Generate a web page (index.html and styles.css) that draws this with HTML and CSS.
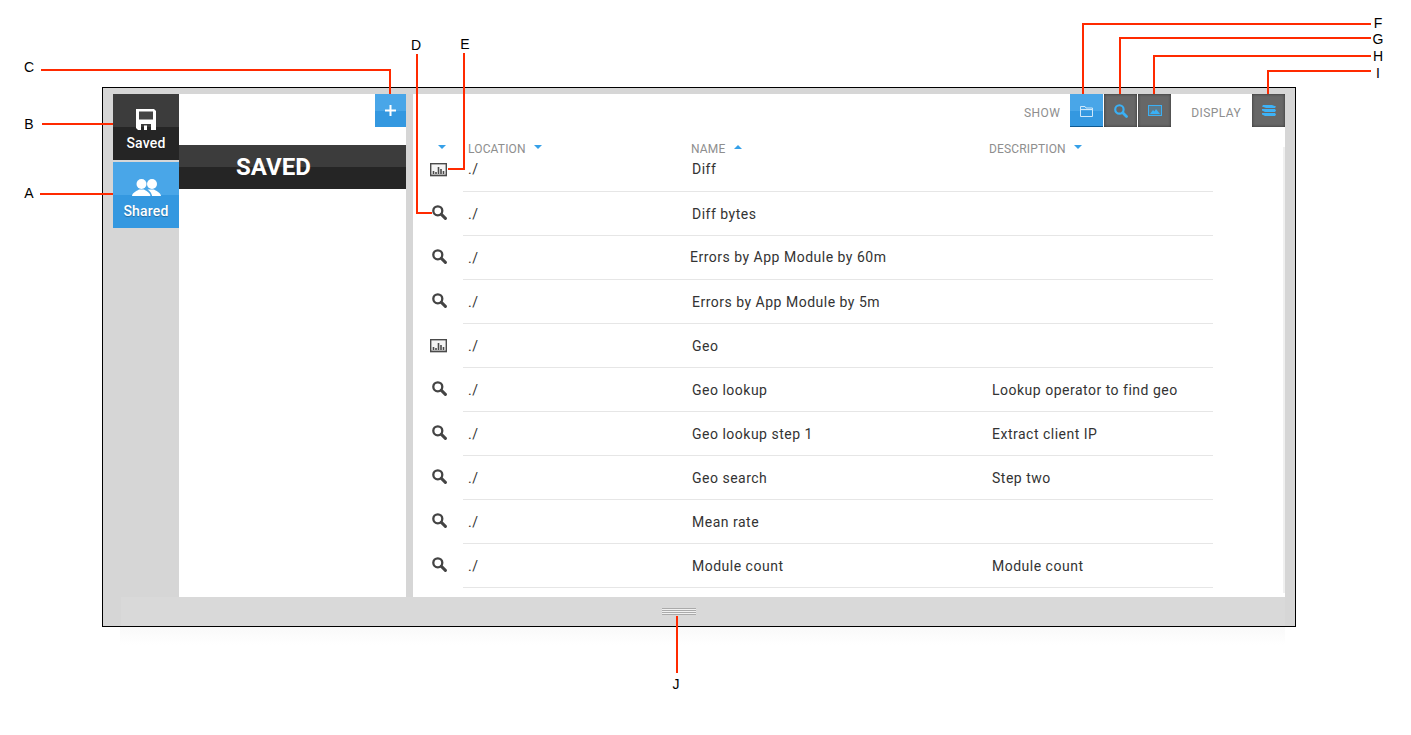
FILE: index.html
```html
<!DOCTYPE html>
<html lang="en">
<head>
    <meta charset="UTF-8">
    <meta name="viewport" content="width=device-width, initial-scale=1.0">
    <title>Saved</title>
    <link rel="stylesheet" href="styles.css">
</head>
<body>
    <svg width="0" height="0" class="defs">
        <symbol id="icon-search" viewBox="0 0 15 15">
            <circle cx="5.8" cy="5.8" r="4.500" fill="none" stroke="currentColor" stroke-width="2.300"/>
            <path d="M9.400 9.400 L13.400 13.400" fill="none" stroke="currentColor" stroke-width="3" stroke-linecap="round"/>
        </symbol>
        <symbol id="icon-chart" viewBox="0 0 17 14">
            <rect x="0.700" y="0.700" width="15.600" height="11.600" fill="#f4f4f4" stroke="#4a4a4a" stroke-width="1.400"/>
            <path d="M3.500 11V8 M6 11V9 M8.500 11V4 M11 11V6 M13.500 11V8" stroke="#4a4a4a" stroke-width="1.600" fill="none"/>
            <path d="M0 13.500H17" stroke="#c4c4c4"/>
        </symbol>
    </svg>

    <div class="canvas">
        <div class="frame">
            <div class="frame-body">
                <nav class="sidebar">
                    <a class="side-tab side-tab-dark">
                        <svg class="side-icon-saved" viewBox="0 0 20 21">
                            <path d="M0 0H18L20 2V21H15V15H5V21H2L0 19Z" fill="#fff"/>
                            <rect x="3" y="2.500" width="14" height="8" fill="#444"/>
                            <rect x="8" y="16.500" width="3" height="4.500" fill="#fff"/>
                        </svg>
                        <span>Saved</span>
                    </a>
                    <a class="side-tab side-tab-blue">
                        <svg class="side-icon-shared" viewBox="0 0 29 17">
                            <circle cx="9.500" cy="5" r="5" fill="#fff"/>
                            <path d="M0 17C0.500 13.500 4 12.500 7 10.500H12C15 12.500 18 13.500 18.500 17Z" fill="#fff"/>
                            <circle cx="20" cy="5" r="5" fill="#fff"/>
                            <path d="M20 17C19.700 14 18 12 15.500 10.500H22C25 12.500 28.500 13.500 29 17Z" fill="#fff"/>
                        </svg>
                        <span>Shared</span>
                    </a>
                </nav>

                <section class="saved-panel">
                    <div class="saved-top">
                        <button class="add-btn">
                            <svg width="11" height="11" viewBox="0 0 11 11"><path d="M5.500 0V11 M0 5.500H11" stroke="#fff" stroke-width="2"/></svg>
                        </button>
                    </div>
                    <h2 class="saved-title">SAVED</h2>
                </section>

                <section class="main-panel">
                    <div class="toolbar">
                        <span class="toolbar-label show-label">SHOW</span>
                        <button class="tool-btn tool-btn-active">
                            <svg width="14" height="12" viewBox="0 0 14 12" fill="none" stroke="#cfe8fa">
                                <path d="M0.500 11.500V1.500H5L6 3H12.500V11.500Z"/>
                                <path d="M0.500 4.500H12.500"/>
                            </svg>
                        </button>
                        <button class="tool-btn">
                            <svg class="tool-search" width="14" height="14"><use href="#icon-search"/></svg>
                        </button>
                        <button class="tool-btn">
                            <svg width="14" height="11" viewBox="0 0 14 11">
                                <rect x="0.500" y="0.500" width="13" height="10" fill="#3ab0f5" fill-opacity="0.25" stroke="#3ab0f5"/>
                                <path d="M2 9L5 5L6.500 6.500L8 4L12 9Z" fill="#3ab0f5"/>
                            </svg>
                        </button>
                        <span class="toolbar-label display-label">DISPLAY</span>
                        <button class="tool-btn">
                            <svg width="14" height="11" viewBox="0 0 14 11" fill="#3db2f7">
                                <path d="M1 0H10L14 1.500L13 3H4L0 1.500Z"/>
                                <path d="M0 4H13L14 5.500L13 7H3L0 5.500Z"/>
                                <path d="M0 8H13L14 9.500L13 11H3L0 9.500Z"/>
                            </svg>
                        </button>
                    </div>

                    <div class="list-head">
                        <span class="head-icon"><i class="caret"></i></span>
                        <span class="head-location">LOCATION <i class="caret"></i></span>
                        <span class="head-name">NAME <i class="caret caret-up"></i></span>
                        <span class="head-desc">DESCRIPTION <i class="caret"></i></span>
                    </div>

                    <div id="rows"></div>
                </section>
            </div>

            <div class="frame-foot">
                <div class="grip"></div>
            </div>
        </div>
        <div class="frame-shadow"></div>

        <!-- callouts -->
        <svg class="callouts" width="1411" height="735" viewBox="0 0 1411 735" fill="none" stroke="#ff2a00" stroke-width="2">
            <path d="M41 70H390V94"/>
            <path d="M42 124H113"/>
            <path d="M40 194H113"/>
            <path d="M417 54V213H432"/>
            <path d="M464 53V169H448"/>
            <path d="M1371 24H1083V94"/>
            <path d="M1371 38H1120V94"/>
            <path d="M1371 56H1154V94"/>
            <path d="M1371 71H1268V94"/>
            <path d="M677 616V673"/>
        </svg>
        <span class="tag tag-a">A</span>
        <span class="tag tag-b">B</span>
        <span class="tag tag-c">C</span>
        <span class="tag tag-d">D</span>
        <span class="tag tag-e">E</span>
        <span class="tag tag-f">F</span>
        <span class="tag tag-g">G</span>
        <span class="tag tag-h">H</span>
        <span class="tag tag-i">I</span>
        <span class="tag tag-j">J</span>
    </div>

    <script>
        // Saved items shown in the list
        const items = [
            { type: 'chart', name: 'Diff', desc: '' },
            { type: 'search', name: 'Diff bytes', desc: '' },
            { type: 'search', name: 'Errors by App Module by 60m', desc: '', shift: true },
            { type: 'search', name: 'Errors by App Module by 5m', desc: '' },
            { type: 'chart', name: 'Geo', desc: '' },
            { type: 'search', name: 'Geo lookup', desc: 'Lookup operator to find geo' },
            { type: 'search', name: 'Geo lookup step 1', desc: 'Extract client IP' },
            { type: 'search', name: 'Geo search', desc: 'Step two' },
            { type: 'search', name: 'Mean rate', desc: '' },
            { type: 'search', name: 'Module count', desc: 'Module count' }
        ];

        const rows = document.getElementById('rows');
        items.forEach(item => {
            const icon = item.type === 'chart'
                ? '<svg class="icon-chart" width="17" height="14"><use href="#icon-chart"/></svg>'
                : '<svg class="icon-search" width="15" height="15"><use href="#icon-search"/></svg>';
            const row = document.createElement('div');
            row.className = 'row';
            row.innerHTML = `
                <div class="row-icon">${icon}</div>
                <div class="row-cells">
                    <span class="cell-location">./</span>
                    <span class="cell-name${item.shift ? ' cell-name-wide' : ''}">${item.name}</span>
                    <span class="cell-desc">${item.desc}</span>
                </div>`;
            rows.appendChild(row);
        });
    </script>
</body>
</html>
```

FILE: styles.css
```css
body {
    margin: 0;
    background-color: #fff;
    font-family: Roboto, "Liberation Sans", sans-serif;
    overflow: hidden;
}

.defs {
    position: absolute;
}

.canvas {
    position: relative;
    width: 1411px;
    height: 735px;
    padding: 87px 0 0 102px;
    box-sizing: border-box;
    overflow: hidden;
}

.frame {
    width: 1194px;
    height: 540px;
    box-sizing: border-box;
    border: 1px solid #000;
    background-color: #d6d6d6;
    padding-top: 6px;
    display: flex;
    flex-direction: column;
}

.frame-body {
    display: flex;
    height: 503px;
    margin: 0 10px;
}

.frame-foot {
    flex: 1;
    margin: 0 10px 0 18px;
    background-color: #d9d9d9;
    display: flex;
    justify-content: center;
    padding-top: 11px;
    padding-right: 49px;
}

.grip {
    width: 34px;
    height: 5px;
    border-top: 1px solid #aaa;
    border-bottom: 1px solid #aaa;
    background: linear-gradient(#f1f1f1 0 1px, #aaa 1px 2px, #f1f1f1 2px 3px, #aaa 3px 4px, #f1f1f1 4px);
}

.frame-shadow {
    width: 1165px;
    height: 18px;
    margin-left: 18px;
    background: linear-gradient(#f9f9f9, #fff);
}

/* left tabs */
.sidebar {
    width: 66px;
    display: flex;
    flex-direction: column;
    gap: 2px;
}

.side-tab {
    height: 66px;
    display: flex;
    flex-direction: column;
    align-items: center;
    color: #fff;
    font-size: 14px;
    font-weight: 500;
    letter-spacing: 0.2px;
    text-shadow: 0 1px 1px rgba(0, 0, 0, 0.3);
}

.side-tab-dark {
    background: linear-gradient(#3c3c3c 50%, #252525 50%);
    padding-top: 15px;
    height: 51px;
}

.side-tab-blue {
    background: linear-gradient(#49a6e8 50%, #3498e0 50%);
    padding-top: 17px;
    height: 49px;
}

.side-icon-saved {
    width: 20px;
    height: 21px;
    margin-bottom: 5px;
}

.side-icon-shared {
    width: 29px;
    height: 17px;
    margin-bottom: 7px;
}

/* saved panel */
.saved-panel {
    width: 227px;
    background-color: #fff;
}

.saved-top {
    height: 51px;
    display: flex;
    justify-content: flex-end;
}

.add-btn {
    width: 31px;
    height: 33px;
    border: 0;
    padding: 2px 0 0;
    background: linear-gradient(#49a6e8 50%, #3498e0 50%);
}

.saved-title {
    margin: 0;
    height: 44px;
    line-height: 44px;
    padding-left: 57px;
    background: linear-gradient(#3c3c3c 50%, #252525 50%);
    color: #fff;
    font-size: 24px;
    font-weight: 700;
}

/* main panel */
.main-panel {
    width: 872px;
    margin-left: 7px;
    background: linear-gradient(#f0f0f0, #f0f0f0) right 0 top 53px / 2px 446px no-repeat, #fff;
}

.toolbar {
    height: 33px;
    display: flex;
    align-items: center;
}

.toolbar-label {
    color: #8e8e8e;
    font-size: 12px;
    letter-spacing: 0.4px;
    padding-top: 4px;
}

.show-label {
    margin-left: auto;
    margin-right: 10px;
}

.display-label {
    margin-left: 20px;
    margin-right: 10px;
}

.tool-btn {
    width: 33px;
    height: 33px;
    margin-left: 1px;
    border: 0;
    padding: 0;
    display: flex;
    align-items: center;
    justify-content: center;
    background-color: #676767;
    box-shadow: inset 0 0 3px #2e2e2e;
}

.tool-btn-active {
    margin-left: 0;
    background: linear-gradient(#49a6e8 50%, #3498e0 50%);
    box-shadow: inset 0 -1px 0 #0f5a92;
}

.tool-search {
    color: #3ab0f5;
}

.list-head {
    height: 30px;
    display: grid;
    grid-template-columns: 55px 223px 298px 1fr;
    align-items: end;
    color: #8e8e8e;
    font-size: 12px;
    letter-spacing: 0.15px;
    line-height: 16px;
}

.head-icon {
    padding-left: 25px;
}

.caret {
    display: inline-block;
    width: 0;
    height: 0;
    margin: 0 0 4px 5px;
    border-left: 4px solid transparent;
    border-right: 4px solid transparent;
    border-top: 4px solid #35a0e8;
}

.caret-up {
    border-top: 0;
    border-bottom: 4px solid #35a0e8;
}

.head-icon .caret {
    margin-left: 0;
}

#rows {
    margin-top: -9px;
}

.row {
    height: 44px;
    display: flex;
    color: #333;
    font-size: 14px;
    letter-spacing: 0.5px;
}

.row-icon {
    width: 50px;
    display: flex;
    align-items: center;
    justify-content: center;
    padding-left: 1px;
    box-sizing: border-box;
    color: #444;
}

.icon-search {
    margin: 0 0 3px 2px;
}

.row-cells {
    width: 750px;
    display: grid;
    grid-template-columns: 229px 300px 1fr;
    align-items: center;
    border-bottom: 1px solid #e6e6e6;
    box-sizing: border-box;
}

.row:first-child .row-cells {
    padding-bottom: 2px;
}

.row:first-child .row-icon {
    padding-bottom: 1px;
}

.cell-location {
    padding-left: 5px;
}

.cell-name-wide {
    margin: 0 0 2px -2px;
}

/* callouts on top of the screenshot */
.callouts {
    position: absolute;
    left: 0;
    top: 0;
}

.tag {
    position: absolute;
    width: 16px;
    text-align: center;
    color: #000;
    font-family: "Liberation Sans", Arial, sans-serif;
    font-size: 14px;
    line-height: 16px;
}

.tag-a { left: 21px; top: 185px; }
.tag-b { left: 21px; top: 116px; }
.tag-c { left: 21px; top: 59px; }
.tag-d { left: 408px; top: 37px; }
.tag-e { left: 457px; top: 36px; }
.tag-f { left: 1370px; top: 15px; }
.tag-g { left: 1370px; top: 31px; }
.tag-h { left: 1370px; top: 48px; }
.tag-i { left: 1370px; top: 65px; }
.tag-j { left: 668px; top: 676px; }
```
